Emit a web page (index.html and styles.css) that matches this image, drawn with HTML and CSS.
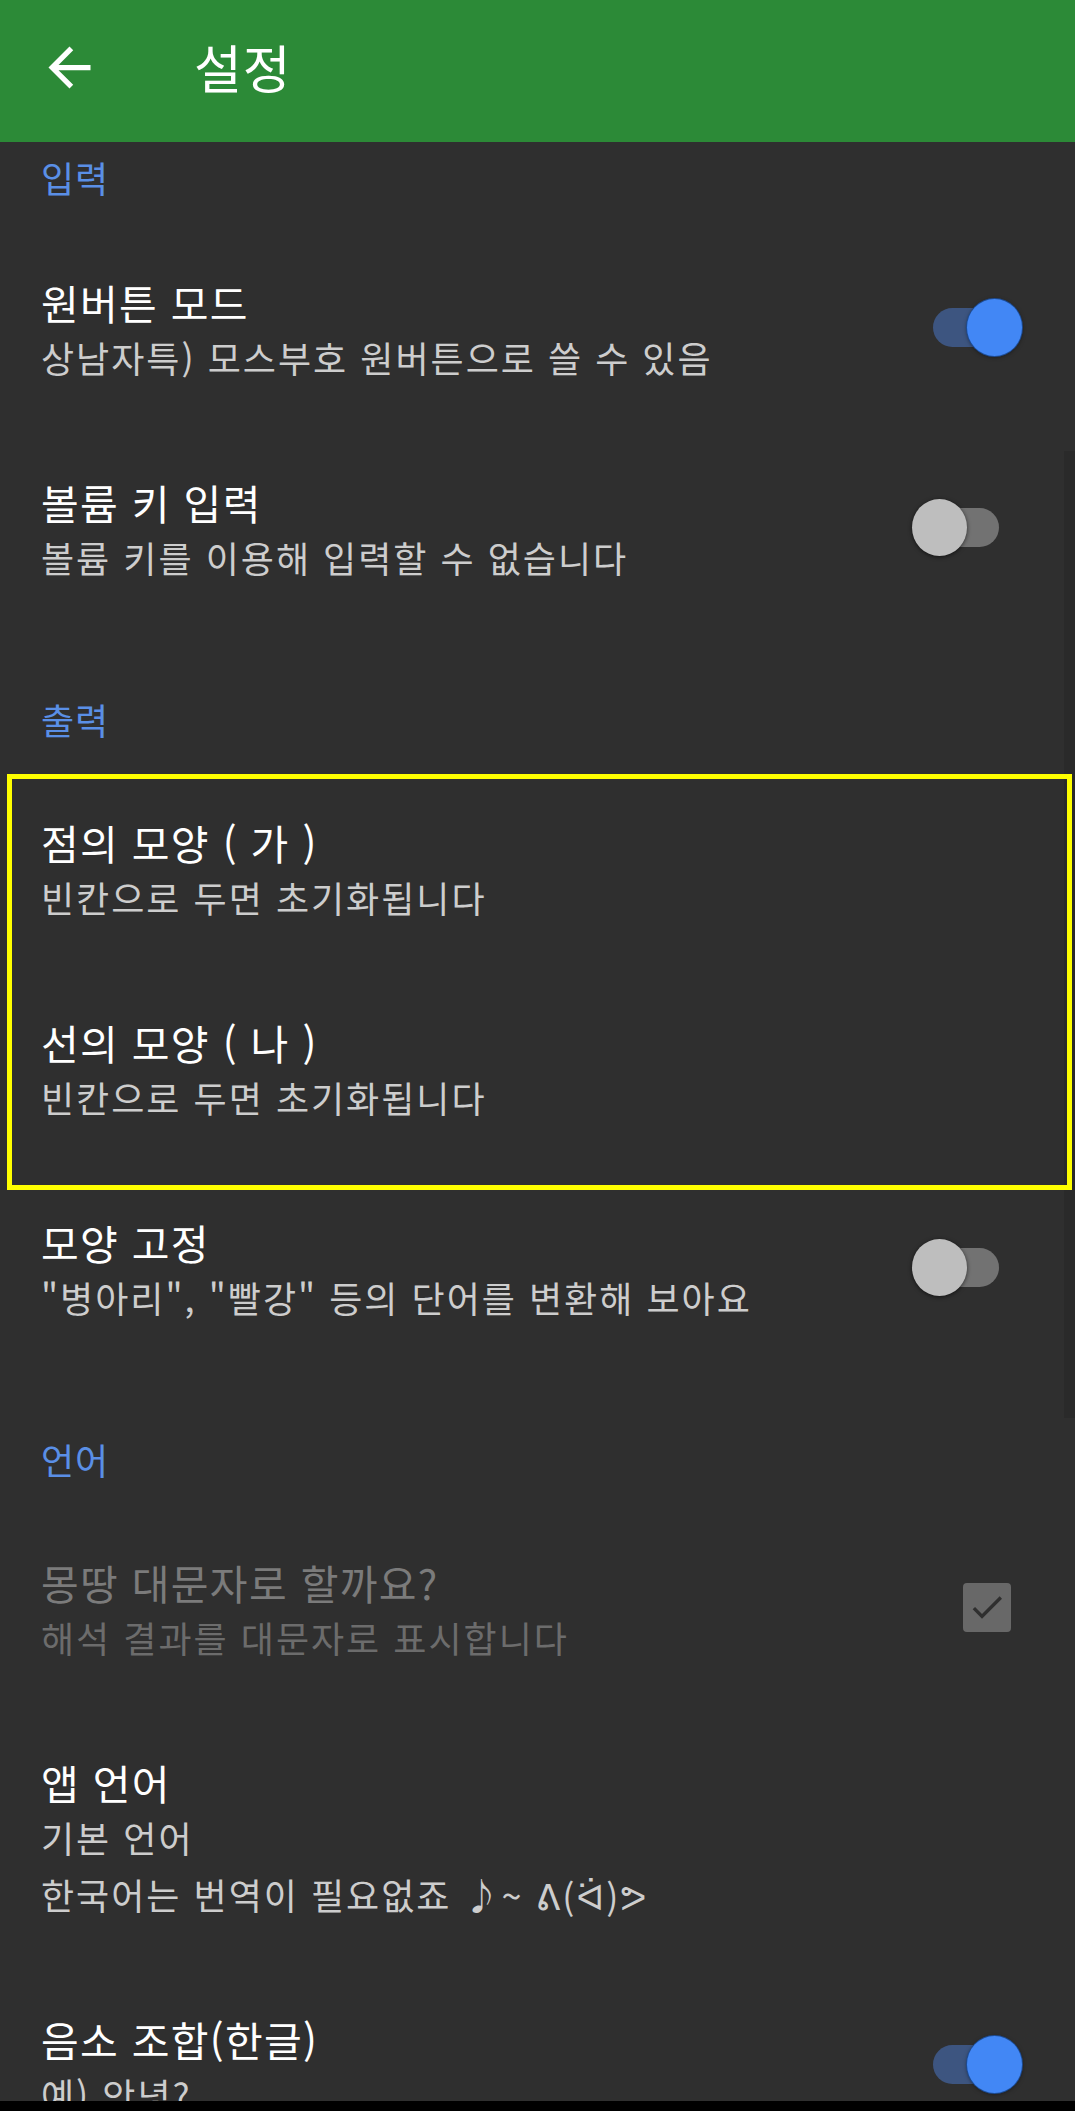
FILE: index.html
```html
<!DOCTYPE html>
<html lang="ko">

<head>
    <meta charset="UTF-8">
    <title>설정</title>
    <link rel="stylesheet" href="styles.css">
</head>

<body>
    <div class="screen">
        <header class="appbar">
            <svg class="back" viewBox="0 0 24 24" width="63" height="63">
                <path fill="#fff" d="M20 11H7.83l5.59-5.59L12 4l-8 8 8 8 1.41-1.41L7.83 13H20v-2z" />
            </svg>
            <h1 class="appbar-title">설정</h1>
        </header>

        <div class="scrollbar"></div>

        <main class="prefs">
            <div class="category first">입력</div>

            <div class="pref">
                <div class="pref-text">
                    <div class="pref-title">원버튼 모드</div>
                    <div class="pref-summary">상남자특) 모스부호 원버튼으로 쓸 수 있음</div>
                </div>
                <div class="widget"><span class="switch on"></span></div>
            </div>

            <div class="pref">
                <div class="pref-text">
                    <div class="pref-title">볼륨 키 입력</div>
                    <div class="pref-summary">볼륨 키를 이용해 입력할 수 없습니다</div>
                </div>
                <div class="widget"><span class="switch"></span></div>
            </div>

            <div class="category">출력</div>

            <div class="highlight">
                <div class="pref">
                    <div class="pref-text">
                        <div class="pref-title">점의 모양 ( 가 )</div>
                        <div class="pref-summary">빈칸으로 두면 초기화됩니다</div>
                    </div>
                </div>

                <div class="pref">
                    <div class="pref-text">
                        <div class="pref-title">선의 모양 ( 나 )</div>
                        <div class="pref-summary">빈칸으로 두면 초기화됩니다</div>
                    </div>
                </div>
            </div>

            <div class="pref">
                <div class="pref-text">
                    <div class="pref-title">모양 고정</div>
                    <div class="pref-summary">"병아리", "빨강" 등의 단어를 변환해 보아요</div>
                </div>
                <div class="widget"><span class="switch"></span></div>
            </div>

            <div class="category">언어</div>

            <div class="pref disabled">
                <div class="pref-text">
                    <div class="pref-title">몽땅 대문자로 할까요?</div>
                    <div class="pref-summary">해석 결과를 대문자로 표시합니다</div>
                </div>
                <div class="widget">
                    <span class="checkbox">
                        <svg viewBox="0 0 24 24" width="40" height="40">
                            <path fill="#2f2f2f" d="M9 16.17L4.83 12l-1.42 1.41L9 19 21 7l-1.41-1.41z" />
                        </svg>
                    </span>
                </div>
            </div>

            <div class="pref">
                <div class="pref-text">
                    <div class="pref-title">앱 언어</div>
                    <div class="pref-summary">기본 언어</div>
                    <div class="pref-summary">한국어는 번역이 필요없죠 ♪~ ᕕ(ᐛ)ᕗ</div>
                </div>
            </div>

            <div class="pref">
                <div class="pref-text">
                    <div class="pref-title">음소 조합(한글)</div>
                    <div class="pref-summary">예) 안녕?</div>
                </div>
                <div class="widget"><span class="switch on"></span></div>
            </div>
        </main>

        <div class="navbar"></div>
    </div>
</body>

</html>
```

FILE: styles.css
```css
body {
    margin: 0;
    background-color: #2f2f2f;
    font-family: "Noto Sans CJK KR", "Noto Sans", "DejaVu Sans", sans-serif;
    color: #fff;
}

.screen {
    position: relative;
    height: 2111px;
    display: flex;
    flex-direction: column;
    overflow: hidden;
}

.appbar {
    height: 142px;
    flex-shrink: 0;
    background-color: #2c8a37;
    display: flex;
    align-items: center;
    padding: 0 0 8px 38px;
    box-sizing: border-box;
}

.back {
    display: block;
}

.appbar-title {
    margin: 0 0 0 93px;
    font-size: 52px;
    font-weight: normal;
    line-height: 60px;
    letter-spacing: 1px;
}

.prefs {
    flex: 1;
    overflow: hidden;
}

.category {
    color: #5a8fe6;
    font-size: 36px;
    line-height: 48px;
    letter-spacing: 1px;
    padding: 68px 41px 24px;
}

.category.first {
    padding-top: 11px;
    padding-bottom: 26px;
}

.pref {
    display: flex;
    align-items: center;
    justify-content: space-between;
    padding: 45px 53px 45px 41px;
}

.pref-text {
    padding-top: 4px;
    margin-bottom: -4px;
}

.pref-title {
    font-size: 41px;
    line-height: 53px;
    letter-spacing: 1.3px;
    color: #fff;
}

.pref-summary {
    font-size: 36px;
    line-height: 57px;
    letter-spacing: 2px;
    color: #cdcdcd;
}

.pref.disabled .pref-title {
    color: #7b7b7b;
}

.pref.disabled .pref-summary {
    color: #6c6c6c;
}

.widget {
    width: 110px;
    height: 57px;
    display: flex;
    align-items: center;
    justify-content: flex-end;
    flex-shrink: 0;
}

.switch {
    position: relative;
    display: block;
    width: 110px;
    height: 57px;
}

.switch::before {
    content: "";
    position: absolute;
    left: 21px;
    top: 9px;
    width: 66px;
    height: 39px;
    border-radius: 20px;
    background-color: #727272;
}

.switch::after {
    content: "";
    position: absolute;
    left: 0;
    top: 0;
    width: 55px;
    height: 57px;
    border-radius: 50%;
    background-color: #bebebe;
    box-shadow: 0 1px 4px rgba(0, 0, 0, 0.6);
}

.switch.on::before {
    background-color: #3d5580;
}

.switch.on::after {
    left: 55px;
    background-color: #4287f5;
    box-shadow: 0 0 0 1px #1d4c94, 0 1px 4px rgba(0, 0, 0, 0.5);
}

.checkbox {
    display: flex;
    align-items: center;
    justify-content: center;
    width: 48px;
    height: 49px;
    margin-right: 11px;
    border-radius: 4px;
    background-color: #686868;
}

.highlight {
    position: relative;
}

.highlight::after {
    content: "";
    position: absolute;
    z-index: 2;
    top: 7px;
    bottom: -23px;
    left: 7px;
    right: 3px;
    border: 5px solid #ffff00;
}

.navbar {
    height: 10px;
    flex-shrink: 0;
    background-color: #000;
}

.scrollbar {
    position: absolute;
    z-index: 1;
    right: 0;
    top: 451px;
    width: 11px;
    height: 967px;
    background-color: #2a2a2a;
}
```
